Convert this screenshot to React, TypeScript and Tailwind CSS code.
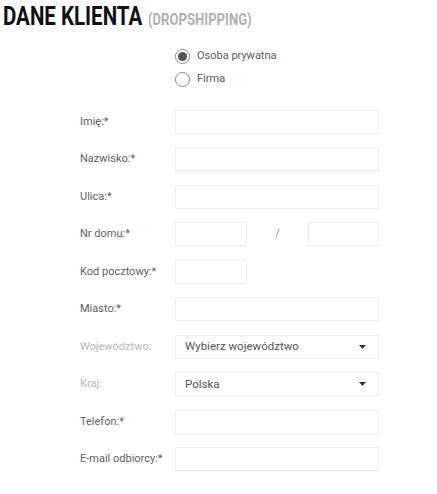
import React from 'react';

const font = { fontFamily: 'Roboto, "Noto Sans", sans-serif' };

const Field: React.FC<{ label: string; muted?: boolean; children: React.ReactNode }> = ({ label, muted, children }) => (
  <div className="flex items-center h-[37.5px]">
    <label className={`w-[95px] shrink-0 text-[11px] ${muted ? 'text-[#b8b8b8]' : 'text-[#616161]'}`}>{label}</label>
    {children}
  </div>
);

const Input: React.FC<{ w?: string }> = ({ w = 'w-[204px]' }) => (
  <input className={`${w} h-[24px] border border-[#efefef] bg-white rounded-[1px] outline-none shadow-[0_1px_1px_rgba(0,0,0,0.03)]`} />
);

const Select: React.FC<{ value: string }> = ({ value }) => (
  <div className="w-[204px] h-[24px] border border-[#efefef] bg-white flex items-center justify-between pl-[9px] pr-[12px]">
    <span className="text-[11.5px] text-[#555]">{value}</span>
    <svg width="7" height="4" viewBox="0 0 7 4"><path d="M0 0h7L3.5 4z" fill="#333" /></svg>
  </div>
);

const Radio: React.FC<{ checked?: boolean; label: string }> = ({ checked, label }) => (
  <div className="flex items-center gap-[7px] h-[23px]">
    <span className="w-[15px] h-[15px] rounded-full border border-[#8a8a8a] flex items-center justify-center bg-white">
      {checked && <span className="w-[9px] h-[9px] rounded-full bg-[#555]" />}
    </span>
    <span className="text-[11px] text-[#5a5a5a]">{label}</span>
  </div>
);

export default function App() {
  return (
    <div className="w-[437px] h-[494px] bg-white" style={font}>
      <h2 className="pl-[3px] pt-[4px] leading-none">
        <span className="inline-flex items-baseline gap-[7px] origin-left scale-x-[0.82] whitespace-nowrap">
          <span className="text-[25px] font-bold text-[#111]">DANE KLIENTA</span>
          <span className="text-[16px] font-bold text-[#b0b0b0]">(DROPSHIPPING)</span>
        </span>
      </h2>

      <div className="pl-[175px] pt-[16px]">
        <Radio checked label="Osoba prywatna" />
        <Radio label="Firma" />
      </div>

      <div className="pl-[80px] pt-[12px]">
        <Field label="Imię:*"><Input /></Field>
        <Field label="Nazwisko:*"><Input /></Field>
        <Field label="Ulica:*"><Input /></Field>
        <Field label="Nr domu:*">
          <Input w="w-[72px]" />
          <span className="w-[61px] text-center text-[11px] text-[#888]">/</span>
          <Input w="w-[71px]" />
        </Field>
        <Field label="Kod pocztowy:*"><Input w="w-[72px]" /></Field>
        <Field label="Miasto:*"><Input /></Field>
        <Field label="Województwo:" muted><Select value="Wybierz województwo" /></Field>
        <Field label="Kraj:" muted><Select value="Polska" /></Field>
        <Field label="Telefon:*"><Input /></Field>
        <Field label="E-mail odbiorcy:*"><Input /></Field>
      </div>
    </div>
  );
}
